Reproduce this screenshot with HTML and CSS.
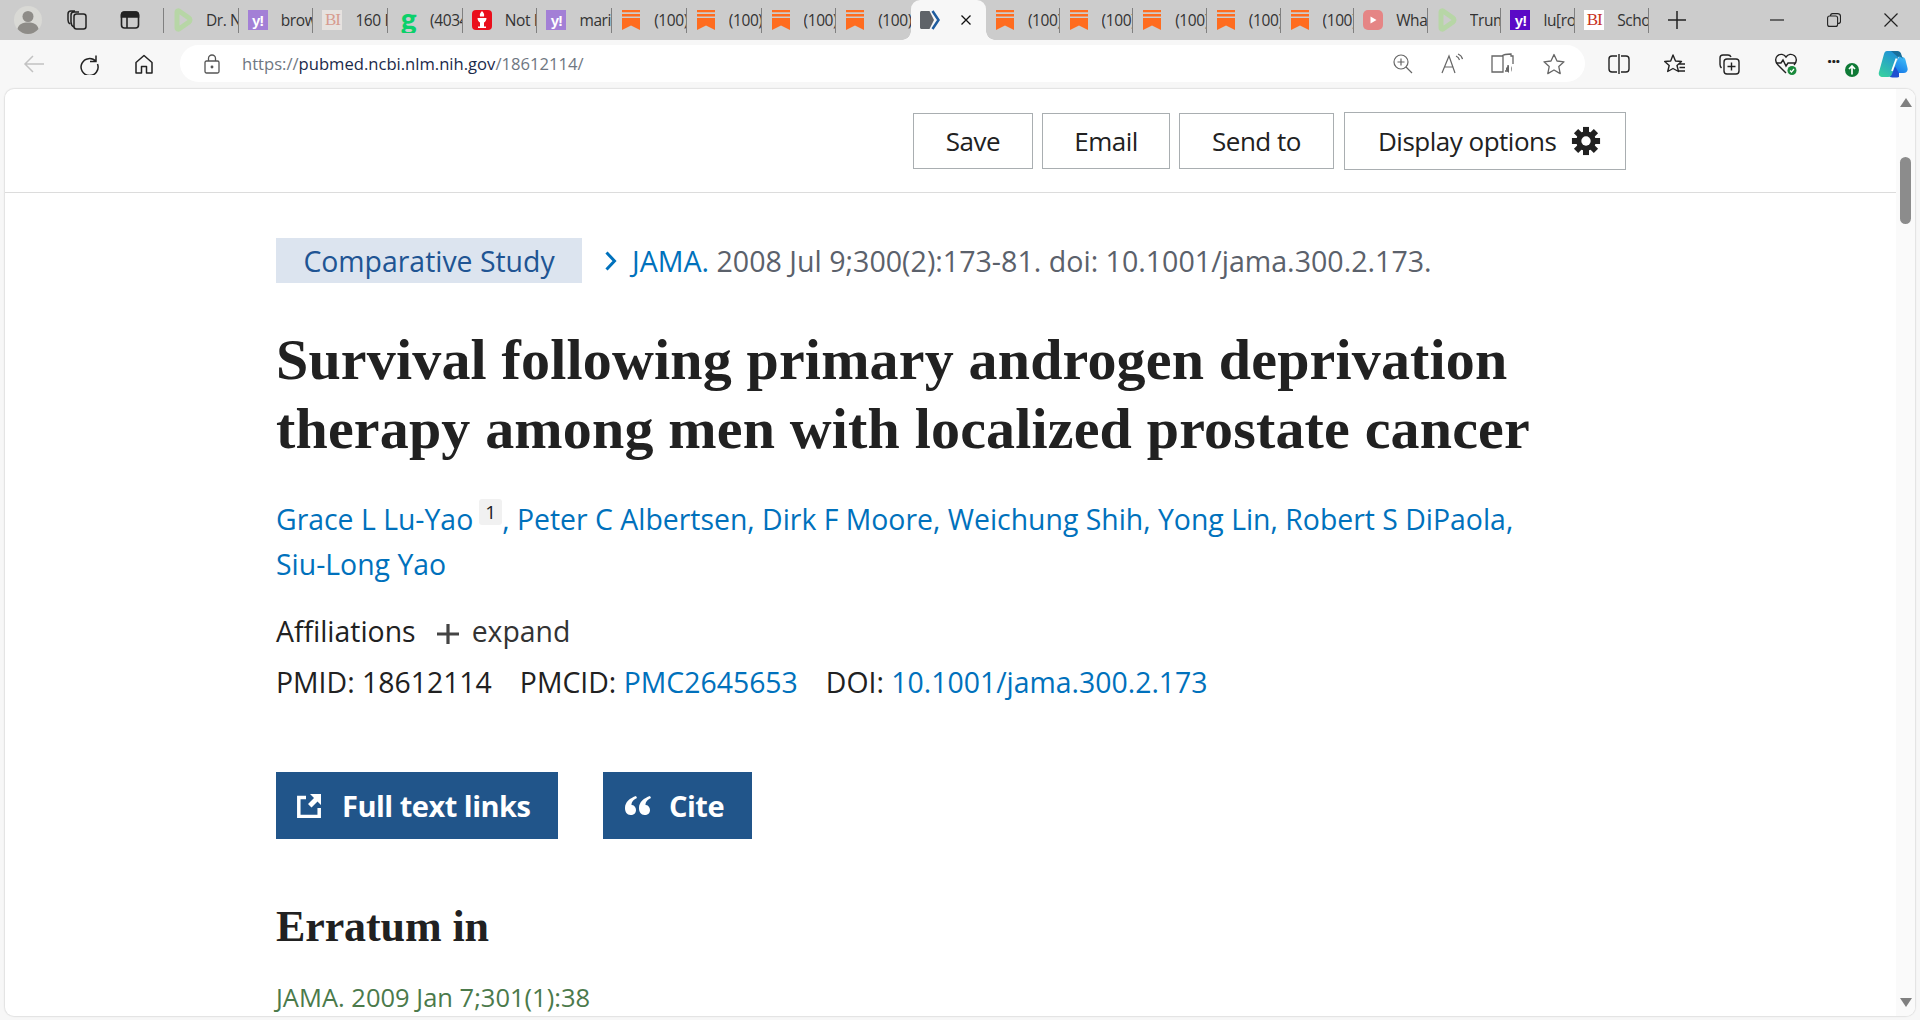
FILE: index.html
```html
<!DOCTYPE html>
<html lang="en">
<head>
<meta charset="utf-8">
<title>Survival following primary androgen deprivation therapy</title>
<link rel="stylesheet" href="styles.css">
</head>
<body>
<svg class="defs" width="0" height="0" aria-hidden="true">
  <symbol id="i-sub" viewBox="-1 0 20 20"><path fill="#ff6c1f" d="M0 0h18v2.200H0zM0 4h18v2.500H0zM0 8h18v12l-9-4.500L0 20z"/></symbol>
  <symbol id="i-play" viewBox="0 0 20 24"><path fill="none" stroke="#b7d6a6" stroke-width="5" stroke-linejoin="round" d="M4 4c0-1 1-1.500 2-1l10 7c1.300 1 1.300 3 0 4L6 21c-1 .5-2 0-2-1z"/></symbol>
</svg>

<header class="tabbar">
  <div class="tool-left">
    <span class="avatar"><svg viewBox="0 0 28 28" width="28" height="28"><circle cx="14" cy="14" r="14" fill="#d9d9d5"/><circle cx="14" cy="10.500" r="5.500" fill="#8e8c88"/><path fill="#8e8c88" d="M3.500 23c1-5 5-6.500 10.500-6.500S23.500 18 24.500 23A14 14 0 0 1 14 28 14 14 0 0 1 3.500 23z"/></svg></span>
    <span class="tool-btn"><svg viewBox="0 0 24 24" width="24" height="24" fill="none" stroke="#222" stroke-width="1.500"><rect x="9" y="6" width="12" height="15" rx="2.500"/><path d="M9 19c-2-1-3-3-3-5V7c0-2 1-3 3-3h5M5 16c-1.500-1-2-2-2-4V6c0-2 1-3 3-3h4"/></svg></span>
    <span class="tool-btn"><svg viewBox="0 0 24 24" width="24" height="24" fill="none" stroke="#222" stroke-width="1.600"><rect x="3.500" y="4" width="17" height="16" rx="3"/><path fill="#222" d="M3.500 7c0-2 1-3 3-3h11c2 0 3 1 3 3v2h-17z"/><path d="M9 9v11"/></svg></span>
  </div>
  <nav class="tabs">
    <div class="tab"><svg class="fav" width="20" height="24"><use href="#i-play"/></svg><span class="tab-title">Dr. N</span></div>
    <div class="tab"><span class="fav fav-y">y!</span><span class="tab-title">brow</span></div>
    <div class="tab"><span class="fav fav-bi">BI</span><span class="tab-title">160 P</span></div>
    <div class="tab"><span class="fav fav-g">g</span><span class="tab-title">(4034</span></div>
    <div class="tab"><span class="fav fav-red"><svg viewBox="0 0 20 24" width="20" height="24"><path fill="#fff" d="M10 3c2 2 2.500 3.500 2 5.500H8C7.500 6.500 8 5 10 3zM5.500 10h9c0 2.500-1.500 4-2.500 4.500v4h2V20H6v-1.500h2v-4C7 14 5.500 12.500 5.500 10z"/></svg></span><span class="tab-title">Not F</span></div>
    <div class="tab"><span class="fav fav-y">y!</span><span class="tab-title">marie</span></div>
    <div class="tab"><svg class="fav" width="20" height="20"><use href="#i-sub"/></svg><span class="tab-title">(100)</span></div>
    <div class="tab"><svg class="fav" width="20" height="20"><use href="#i-sub"/></svg><span class="tab-title">(100)</span></div>
    <div class="tab"><svg class="fav" width="20" height="20"><use href="#i-sub"/></svg><span class="tab-title">(100)</span></div>
    <div class="tab tab-pre"><svg class="fav" width="20" height="20"><use href="#i-sub"/></svg><span class="tab-title">(100)</span></div>
    <div class="tab tab-active"><svg class="fav" viewBox="0 0 20 20" width="20" height="20"><path fill="#5f6368" d="M1.500 1h8l4.500 9-4.500 9h-8C.7 19 0 18.300 0 17.500v-15C0 1.700.7 1 1.500 1z"/><path fill="none" stroke="#1f5c9e" stroke-width="2.500" d="M12.500 1l6 9-6 9"/></svg><svg class="tab-close" viewBox="0 0 10 10" width="10" height="10"><path fill="none" stroke="#111" stroke-width="1.300" d="M.5.500l9 9M9.500.500l-9 9"/></svg></div>
    <div class="tab"><svg class="fav" width="20" height="20"><use href="#i-sub"/></svg><span class="tab-title">(100)</span></div>
    <div class="tab"><svg class="fav" width="20" height="20"><use href="#i-sub"/></svg><span class="tab-title">(100)</span></div>
    <div class="tab"><svg class="fav" width="20" height="20"><use href="#i-sub"/></svg><span class="tab-title">(100)</span></div>
    <div class="tab"><svg class="fav" width="20" height="20"><use href="#i-sub"/></svg><span class="tab-title">(100)</span></div>
    <div class="tab"><svg class="fav" width="20" height="20"><use href="#i-sub"/></svg><span class="tab-title">(100)</span></div>
    <div class="tab"><span class="fav fav-yt"><svg viewBox="0 0 20 20" width="20" height="20"><path fill="#fff" d="M7.500 6.500l6 3.500-6 3.500z"/></svg></span><span class="tab-title">What</span></div>
    <div class="tab"><svg class="fav" width="20" height="24"><use href="#i-play"/></svg><span class="tab-title">Trum</span></div>
    <div class="tab"><span class="fav fav-y fav-y-on">y!</span><span class="tab-title">lu[ro</span></div>
    <div class="tab"><span class="fav fav-bi fav-bi-on">BI</span><span class="tab-title">Scho</span></div>
    <span class="new-tab"><svg viewBox="0 0 20 20" width="20" height="20"><path stroke="#222" stroke-width="1.500" d="M10 1v18M1 10h18"/></svg></span>
  </nav>
  <div class="win-ctrl">
    <svg viewBox="0 0 14 14" width="14" height="14"><path stroke="#222" stroke-width="1.200" d="M0 7h14"/></svg>
    <svg viewBox="0 0 14 14" width="14" height="14" fill="none" stroke="#222" stroke-width="1.100"><rect x=".6" y="3" width="10" height="10.400" rx="2"/><path d="M3.500 3c0-1.500.7-2.400 2-2.400h5c2 0 3 1 3 3v5c0 1.300-1 2-2.800 2"/></svg>
    <svg viewBox="0 0 14 14" width="14" height="14"><path stroke="#222" stroke-width="1.200" d="M.5.500l13 13M13.500.500l-13 13"/></svg>
  </div>
</header>

<div class="toolbar">
  <div class="nav-btns">
    <svg viewBox="0 0 22 20" width="22" height="20" fill="none" stroke="#c2c2c2" stroke-width="1.500"><path d="M21 10H2M10 2l-8 8 8 8"/></svg>
    <svg viewBox="0 0 22 22" width="22" height="22" fill="none" stroke="#222" stroke-width="1.500"><path d="M18 2.500v6h-6M18 8.500A8.500 8.500 0 1 0 19.500 11"/></svg>
    <svg viewBox="0 0 22 22" width="22" height="22" fill="none" stroke="#222" stroke-width="1.500" stroke-linejoin="round"><path d="M3 9.500L11 2.500l8 7V20h-5.500v-6.500h-5V20H3z"/></svg>
  </div>
  <div class="omnibox">
    <svg class="lock" viewBox="0 0 16 20" width="16" height="20" fill="none" stroke="#555" stroke-width="1.300"><rect x="1" y="7" width="14" height="12" rx="1.500"/><path d="M4.500 7V4.500a3.500 3.500 0 0 1 7 0V7"/><circle cx="8" cy="13" r=".8" fill="#555"/></svg>
    <span class="url"><span class="url-dim">https://</span>pubmed.ncbi.nlm.nih.gov<span class="url-dim">/18612114/</span></span>
    <span class="omni-icons">
      <svg viewBox="0 0 20 20" width="20" height="20" fill="none" stroke="#666" stroke-width="1.200"><circle cx="8" cy="8" r="7"/><path d="M13 13l6 6M8 4.500v7M4.500 8h7"/></svg>
      <svg viewBox="0 0 22 22" width="22" height="22" fill="none" stroke="#666" stroke-width="1.200"><path d="M1 20L8 3l6 17M3.500 14h9M15 3c2 .8 3 2 3.500 4M17 1c2.500 1 4 3 4.500 5"/></svg>
      <svg viewBox="0 0 24 22" width="24" height="22" fill="none" stroke="#666" stroke-width="1.300"><path d="M11 3H1v16h11V3zM11 3c2-2 7-2 9-2v2h2v8M17 12v6h-3"/><path fill="#666" stroke="none" d="M15 15l3-3v8l-3-3zM20 13c1 1.500 1 4 0 6v-6z"/></svg>
      <svg viewBox="0 0 22 22" width="22" height="22" fill="none" stroke="#666" stroke-width="1.300" stroke-linejoin="round"><path d="M11 1.500l3 6.500 7 .8-5.200 4.800 1.400 7L11 17l-6.200 3.600 1.400-7L1 8.800 8 8z"/></svg>
    </span>
  </div>
  <div class="tool-right">
    <svg class="split" viewBox="0 0 22 20" width="22" height="20" fill="none" stroke="#222" stroke-width="1.400"><path d="M9 2H4C2 2 1 3 1 5v10c0 2 1 3 3 3h5M13 2h5c2 0 3 1 3 3v10c0 2-1 3-3 3h-5M11 0v20"/></svg>
    <svg viewBox="0 0 22 20" width="22" height="20" fill="none" stroke="#222" stroke-width="1.400" stroke-linejoin="round"><path d="M9 1l2.500 6 6 .5-4.500 4 1.500 6L9 14.500 3.700 17.500l1.500-6-4.500-4 6-.5zM15 10h6M15.500 13.500h5.500M14.500 17h6.500"/></svg>
    <svg viewBox="0 0 24 22" width="24" height="22" fill="none" stroke="#222" stroke-width="1.400"><rect x="6" y="6" width="15" height="15" rx="3"/><path d="M13.500 9.500v8M9.500 13.500h8M3.500 15C2.500 14 2 13 2 11.500V5c0-2 1-3 3-3h5c1.500 0 2.500.8 3 2"/></svg>
    <span class="health"><svg viewBox="0 0 24 24" width="24" height="24" fill="none" stroke="#222" stroke-width="1.400"><path d="M12 21L4 13C1 10 1 6 3.500 3.800 6.200 1.500 10 2 12 5c2-3 5.800-3.500 8.500-1.200 2.500 2.200 2.500 6.200-.5 9.200"/><path d="M2 11h5l2-3 3 6 2-3h7"/><circle cx="18" cy="18.500" r="4.500" fill="#1a8a3c" stroke="none"/><path stroke="#fff" stroke-width="1.200" d="M16 18.500l1.500 1.500 2.500-3"/></svg></span>
    <span class="more"><span class="dots">···</span><span class="update"><svg viewBox="0 0 14 14" width="14" height="14"><circle cx="7" cy="7" r="7" fill="#0f7a36"/><path stroke="#fff" stroke-width="1.700" fill="none" d="M7 11.500V3.500M4 6l3-3 3 3"/></svg></span></span>
    <svg class="copilot" viewBox="0 0 30 28" width="30" height="28"><defs><linearGradient id="cp1" x1="0.700" y1="0" x2="0.200" y2="1"><stop offset="0" stop-color="#1f8fd8"/><stop offset="1" stop-color="#37cfa0"/></linearGradient><linearGradient id="cp2" x1="0.800" y1="0" x2="0.200" y2="1"><stop offset="0" stop-color="#3fbdf7"/><stop offset="1" stop-color="#1272e6"/></linearGradient></defs><path fill="url(#cp2)" d="M21 7h3c2 0 3 1 3.500 3l2 8c.6 3-1 5-4 5H17c-2 0-3-.5-3.500-2z"/><path fill="#1f4fd0" d="M10 24l5-11 6 10v4c-2 .8-6 .8-9 0z"/><path fill="url(#cp1)" d="M9 1h9c2 0 3 1 3.500 3L14 24c-.5 2-2 3-4 3H5c-3 0-5-2-4-5L6 4c.5-2 1.500-3 3-3z"/><path fill="#1b6f9a" d="M13 1h6c2.500 0 4 1.500 4.500 4L25 9c-1.500-2-3.500-2.500-5-2z"/><path stroke="#fff" stroke-width="1.800" d="M18.500 8.500L14 21"/></svg>
  </div>
</div>

<div class="page">
  <div class="doc">
    <div class="actions">
      <button class="act act-save">Save</button>
      <button class="act act-email">Email</button>
      <button class="act act-send">Send to</button>
      <button class="act act-display">Display options
        <svg viewBox="0 0 32 32" width="30" height="30"><g fill="#212121"><rect x="12.800" y="1" width="6.400" height="30"/><rect x="12.800" y="1" width="6.400" height="30" transform="rotate(45 16 16)"/><rect x="12.800" y="1" width="6.400" height="30" transform="rotate(90 16 16)"/><rect x="12.800" y="1" width="6.400" height="30" transform="rotate(135 16 16)"/><circle cx="16" cy="16" r="10.500"/></g><circle cx="16" cy="16" r="5" fill="#fff"/></svg>
      </button>
    </div>
    <main class="article">
      <div class="citation">
        <span class="chip">Comparative Study</span>
        <svg class="chev" viewBox="0 0 14 20" width="14" height="20"><path fill="none" stroke="#0071bc" stroke-width="3" d="M2.500 1.500l8 8.500-8 8.500"/></svg>
        <span class="cit-text"><a class="cit-journal">JAMA.</a> 2008 Jul 9;300(2):173-81. doi: 10.1001/jama.300.2.173.</span>
      </div>
      <h1 class="title">Survival following primary androgen deprivation<br>therapy among men with localized prostate cancer</h1>
      <p class="authors"><a>Grace L Lu-Yao</a><sup class="aff-num">1</sup><span class="sep">, </span><a>Peter C Albertsen</a><span class="sep">, </span><a>Dirk F Moore</a><span class="sep">, </span><a>Weichung Shih</a><span class="sep">, </span><a>Yong Lin</a><span class="sep">, </span><a>Robert S DiPaola</a><span class="sep">,</span><br><a>Siu-Long Yao</a></p>
      <p class="affil">Affiliations <svg class="plus" viewBox="0 0 22 22" width="22" height="22"><path stroke="#444" stroke-width="3.200" d="M11 1v20M0 11h22"/></svg> <span class="expand">expand</span></p>
      <p class="ids"><span class="id">PMID: 18612114</span><span class="id">PMCID: <a>PMC2645653</a></span><span class="id">DOI: <a>10.1001/jama.300.2.173</a></span></p>
      <div class="cta">
        <button class="cta-btn cta-full"><svg viewBox="0 0 24 24" width="24" height="24"><path fill="none" stroke="#fff" stroke-width="3.500" d="M9 3.500H1.800v19h20.400V14"/><path fill="#fff" d="M13 0h11v11l-3.500-3.500-6 6-3.500-3.500 6-6z"/></svg>Full text links</button>
        <button class="cta-btn cta-cite"><svg viewBox="0 0 26 19" width="26" height="19"><path fill="#fff" d="M11 0C5 2 0 6 0 12c0 4 2 7 5.500 7S11 17 11 14s-2-5-4.500-5C6.500 6 8 4 12 2zM25 0c-6 2-11 6-11 12 0 4 2 7 5.500 7s5.500-2 5.500-5-2-5-4.500-5c0-3 1.500-5 5.500-7z"/></svg>Cite</button>
      </div>
      <h2 class="sub">Erratum in</h2>
      <p class="erratum">JAMA. 2009 Jan 7;301(1):38</p>
    </main>
  </div>
  <div class="scrollbar">
    <span class="arrow arrow-up"></span>
    <span class="thumb"></span>
    <span class="arrow arrow-down"></span>
  </div>
</div>
</body>
</html>
```

FILE: styles.css
```css
* { box-sizing: border-box; }
html, body { margin: 0; height: 100%; }
body {
  height: 1020px;
  overflow: hidden;
  display: flex;
  flex-direction: column;
  background: #f7f7f7;
  font-family: "Open Sans", "Noto Sans", sans-serif;
  color: #212121;
}
.defs { position: absolute; }

/* tab strip */
.tabbar { height: 40px; flex: none; background: #cccccc; display: flex; align-items: center; }
.tool-left { display: flex; align-items: center; width: 164px; padding-left: 14px; flex: none; border-right: 1px solid #808080; height: 25px; }
.avatar { display: flex; width: 28px; height: 28px; margin-right: 23px; }
.tool-btn { display: flex; width: 24px; margin-right: 29px; }
.tabs { display: flex; align-items: center; height: 40px; flex: none; }
.tab {
  width: 74.700px;
  height: 25px;
  flex: none;
  display: flex;
  align-items: center;
  overflow: hidden;
  white-space: nowrap;
  padding-left: 9px;
  border-right: 1px solid #808080;
  font-size: 15.500px;
  letter-spacing: -.4px;
  color: #333;
}
.tab-active ~ .tab { width: 73.670px; }
.tab-pre { border-right: 0; }
.fav { width: 20px; flex: none; margin-right: 13px; display: flex; align-items: center; justify-content: center; }
.tab-title { flex: 1; min-width: 0; overflow: hidden; }
.fav-y { height: 20px; background: #a37fd6; color: #fff; font: bold 15px "Liberation Sans", sans-serif; letter-spacing: -1px; }
.fav-y-on { background: #5b09c6; }
.fav-bi { height: 20px; background: #e6e2df; color: #d79c8f; font: 17px "Liberation Serif", serif; letter-spacing: -1px; }
.fav-bi-on { background: #fff; color: #c8321e; }
.fav-g { height: 24px; padding-left: 3px; color: #0bd06a; font: 900 30px/20px "Lato", sans-serif; align-items: flex-start; }
.fav-red { height: 20px; background: #ea0f1c; border-radius: 4px; overflow: hidden; }
.fav-yt { height: 20px; background: #e58585; border-radius: 5px; }
.tab-active {
  height: 40px;
  width: 75px;
  background: #f7f7f7;
  border-right: 0;
  border-radius: 9px 9px 0 0;
  padding-left: 9px;
  overflow: visible;
  position: relative;
}
.tab-active::before,
.tab-active::after {
  content: "";
  position: absolute;
  bottom: 0;
  width: 9px;
  height: 9px;
}
.tab-active::before { left: -9px; background: radial-gradient(circle at 0 0, transparent 8.500px, #f7f7f7 9px); }
.tab-active::after { right: -9px; background: radial-gradient(circle at 100% 0, transparent 8.500px, #f7f7f7 9px); }
.tab-active .fav { margin-right: 21px; }
.tab-close { flex: none; }
.new-tab { display: flex; margin-left: 18px; }
.win-ctrl { margin-left: auto; display: flex; align-items: center; gap: 43px; padding-right: 22px; }

/* address row */
.toolbar { height: 49px; flex: none; background: #f7f7f7; display: flex; align-items: flex-start; padding-top: 5px; }
.nav-btns { width: 180px; height: 37px; flex: none; display: flex; align-items: center; gap: 33px; padding-left: 23px; }
.omnibox { width: 1405px; height: 37px; flex: none; background: #fff; border-radius: 19px; display: flex; align-items: center; padding: 0 20px 0 24px; }
.lock { flex: none; }
.url { margin-left: 22px; font-size: 16.600px; color: #1b2a4a; }
.url-dim { color: #6f7782; }
.omni-icons { margin-left: auto; display: flex; align-items: center; gap: 28px; }
.tool-right { flex: 1; height: 37px; display: flex; align-items: center; gap: 32px; padding-left: 23px; }
.split { margin-right: 2px; }
.health { display: flex; }
.more { display: flex; width: 30px; height: 24px; position: relative; margin-left: -3px; }
.dots { font-size: 18px; font-weight: 700; line-height: 18px; color: #222; letter-spacing: -1px; }
.update { position: absolute; left: 18px; top: 11px; display: flex; }
.copilot { margin-left: -11px; flex: none; }

/* page */
.page {
  flex: 1;
  min-height: 0;
  margin: 0 5px 4px 5px;
  background: #fff;
  border-radius: 9px;
  box-shadow: 0 0 1px 1px #e2e2e2;
  overflow: hidden;
  display: flex;
}
.doc { flex: 1; min-width: 0; }
.actions {
  height: 104px;
  border-bottom: 1px solid #dcdcdc;
  display: flex;
  align-items: center;
  justify-content: flex-end;
  gap: 9px;
  padding: 0 270px 0 0;
}
.act {
  height: 56px;
  background: #fff;
  border: 1px solid #a9aeb1;
  font: 26px "Open Sans", sans-serif;
  letter-spacing: -.5px;
  color: #212121;
  padding: 0;
}
.act-save { width: 120px; }
.act-email { width: 128px; }
.act-send { width: 155px; }
.act-display { width: 282px; height: 58px; margin-left: 1px; padding-left: 33px; display: flex; align-items: center; gap: 15px; }

.article { padding: 45px 0 0 271px; }
.citation { display: flex; align-items: center; height: 45px; }
.chip { height: 45px; width: 306px; background: #dce4ef; color: #205493; font-size: 28.400px; display: flex; align-items: center; justify-content: center; }
.chev { margin-left: 22px; }
.cit-text { margin-left: 14px; font-size: 28.600px; color: #5b616b; white-space: nowrap; }
.cit-journal { color: #0071bc; }
.title {
  margin: 42px 0 0;
  font: bold 58px/69px "Liberation Serif", serif;
  color: #212121;
  letter-spacing: .17px;
  white-space: nowrap;
}
.authors { margin: 34px 0 0; font-size: 28.400px; line-height: 45px; white-space: nowrap; }
.authors a, .ids a { color: #0071bc; }
.aff-num {
  display: inline-block;
  width: 23px;
  height: 26px;
  margin-left: 6px;
  background: #f1f1f1;
  border-radius: 3px;
  font-size: 19px;
  line-height: 26px;
  text-align: center;
  vertical-align: 11px;
}
.sep { color: #0071bc; }
.affil { margin: 22px 0 0; font-size: 28.400px; line-height: 45px; display: flex; align-items: center; }
.plus { margin: 5px 13px 0 21px; }
.expand { color: #333; }
.ids { margin: 6px 0 0; font-size: 28.400px; line-height: 45px; display: flex; gap: 28px; }
.cta { margin-top: 67px; display: flex; gap: 45px; }
.cta-btn {
  height: 67px;
  background: #21558a;
  border: 0;
  color: #fff;
  font: 700 29px "Open Sans", sans-serif;
  letter-spacing: -.5px;
  display: flex;
  align-items: center;
  padding: 0;
}
.cta-full { width: 282px; padding-left: 21px; gap: 21px; }
.cta-cite { width: 149px; padding-left: 22px; gap: 18px; }
.sub { margin: 61px 0 0; font: bold 44px/54px "Liberation Serif", serif; letter-spacing: -.1px; color: #212121; }
.erratum { margin: 26px 0 0; font-size: 25.500px; line-height: 34px; color: #4b7a4b; }

/* scrollbar */
.scrollbar { width: 19px; flex: none; background: #fafafa; display: flex; flex-direction: column; align-items: center; padding: 9px 0 9px; }
.arrow { width: 0; height: 0; border-left: 6px solid transparent; border-right: 6px solid transparent; }
.arrow-up { border-bottom: 9px solid #808080; }
.arrow-down { border-top: 9px solid #808080; margin-top: auto; }
.thumb { width: 11px; height: 67px; margin-top: 50px; background: #8c8c8c; border-radius: 6px; }
```
